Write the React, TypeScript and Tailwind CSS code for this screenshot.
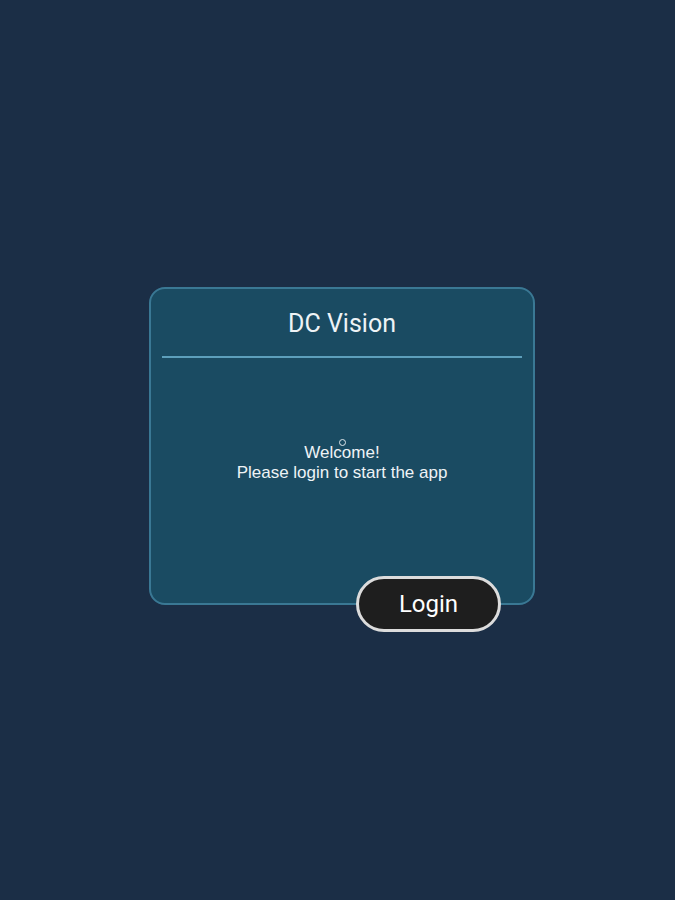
import React from 'react';

const App: React.FC = () => {
  return (
    <div className="min-h-screen w-full bg-[#1b2e46] pt-[287px] pl-[149px]" style={{ fontFamily: '"Liberation Sans", Arial, sans-serif' }}>
      <div className="relative w-[386px] h-[318px] rounded-[16px] border-2 border-[#3a7894] bg-[#1a4b62]">
        <div className="h-[67px] flex items-center justify-center pt-[3px]">
          <h1 className="text-[25px] text-[#eef3f6] font-['Roboto',sans-serif]">DC Vision</h1>
        </div>
        <div className="mx-[11px] h-[2px] bg-[#5d9fbb]" />
        <div className="relative mt-[85px] flex flex-col items-center text-[17px] leading-[20px] text-[#eef3f6]">
          <span>Welcome!</span>
          <span>Please login to start the app</span>
          <span className="absolute left-[188px] top-[-4px] w-[7px] h-[7px] rounded-full border-[1.5px] border-[#dfe6ea]" />
        </div>
        <button className="absolute left-[205px] top-[287px] w-[145px] h-[56px] rounded-full bg-[#1e1e1e] border-[3px] border-[#dcdcdc] text-white text-[24px] font-['Roboto',sans-serif]">
          Login
        </button>
      </div>
    </div>
  );
};

export default App;
